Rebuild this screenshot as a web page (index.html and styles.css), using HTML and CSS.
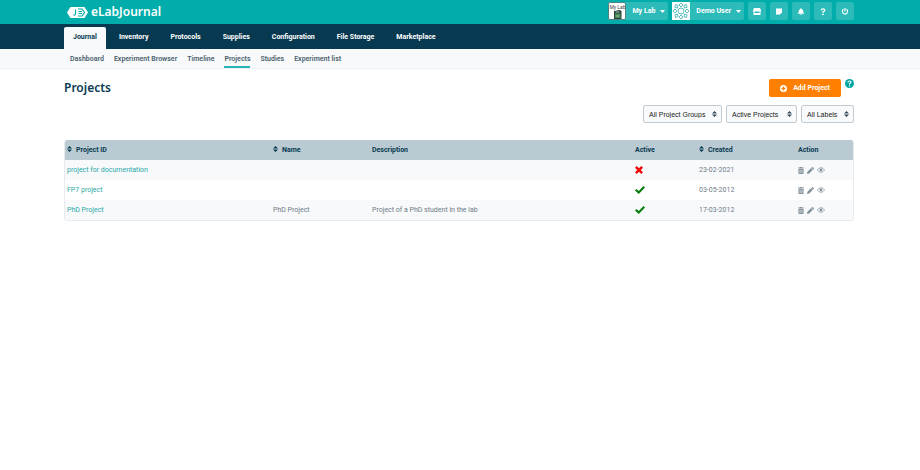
FILE: index.html
```html
<!DOCTYPE html>
<html lang="en">
<head>
  <meta charset="UTF-8" />
  <meta name="viewport" content="width=device-width, initial-scale=1.0"/>
  <title>eLabJournal - Projects</title>
  <link rel="stylesheet" href="styles.css">
</head>
<body>
  <svg class="sprite" aria-hidden="true">
    <symbol id="sort" viewBox="0 0 10 12"><path d="M5 0l5 5H0zM5 12l5-5H0z"/></symbol>
    <symbol id="caret" viewBox="0 0 10 6"><path d="M0 0h10L5 6z"/></symbol>
    <symbol id="trash" viewBox="0 0 14 16"><path fill-rule="evenodd" d="M0 1h4l1-1h4l1 1h4v2H0zM1 4h12v11l-1 1H2l-1-1zM4 6v8h1V6zm2.500 0v8h1V6zM9 6v8h1V6z"/></symbol>
    <symbol id="pencil" viewBox="0 0 16 16"><path d="M0 16l1-5 8.500-8.500 4 4L5 15zM10.500 1.500L12 0h1l3 3v1l-1.500 1.500z"/></symbol>
    <symbol id="eye" viewBox="0 0 20 14"><path fill="none" stroke="currentColor" stroke-width="1.800" d="M1 7q9-12 18 0-9 12-18 0z"/><circle cx="10" cy="7" r="3.500"/></symbol>
    <symbol id="check" viewBox="0 0 20 16"><path d="M0 9l3-3 4.500 4L17 0l3 3L7.500 16z"/></symbol>
    <symbol id="cross" viewBox="0 0 16 16"><path d="M3.500 0L8 4.500 12.500 0 16 3.500 11.500 8l4.500 4.500-3.500 3.500L8 11.500 3.500 16 0 12.500 4.500 8 0 3.500z"/></symbol>
  </svg>

  <header class="topbar">
    <a class="brand" href="#">
      <svg class="logo" viewBox="0 0 42 22" aria-hidden="true">
        <path fill="#fff" d="M7 0h28l7 11-7 11H7L0 11z"/>
        <path fill="none" stroke="#00adab" stroke-width="2.400" d="M17 5v8q0 4-4 3M22 4h8l5 7-5 7h-8M23 9h7M23 13h7"/>
      </svg>
      <span>eLabJournal</span>
    </a>
    <div class="tools">
      <button class="account">
        <span class="avatar lab">
          <span>My Lab</span>
          <svg viewBox="0 0 16 18" aria-hidden="true"><path fill="#263f3b" d="M1 2l11-2 4 2v16H1z"/><path fill="#4d8b56" d="M3 7h11v9H3z"/><path stroke="#a8c3b2" stroke-width="2" d="M4 4h8M6 12h5"/></svg>
        </span>
        <span class="account-name">My Lab</span>
        <svg class="caret"><use href="#caret"/></svg>
      </button>
      <button class="account">
        <span class="avatar user">
          <svg viewBox="0 0 36 36" fill="none" stroke="#20a9aa" stroke-width="1.500" aria-hidden="true">
            <circle cx="18" cy="18" r="6"/>
            <path d="M18 2l4 4-4 4-4-4zM18 26l4 4-4 4-4-4zM2 18l4-4 4 4-4 4zM26 18l4-4 4 4-4 4zM7 5l5 2-1 5-5-1zM29 5l-5 2 1 5 5-1zM7 31l5-2-1-5-5 1zM29 31l-5-2 1-5 5 1z"/>
          </svg>
        </span>
        <span class="account-name">Demo User</span>
        <svg class="caret"><use href="#caret"/></svg>
      </button>
      <button class="tool" aria-label="Marketplace"><svg viewBox="0 0 16 14"><path fill-rule="evenodd" d="M2 0h12l2 5v2h-1v7H1V7H0V5zM3 7v3h10V7z"/></svg></button>
      <button class="tool" aria-label="Notes"><svg viewBox="0 0 14 14"><path d="M1 1h12v8l-4 4H1z"/></svg></button>
      <button class="tool" aria-label="Notifications"><svg viewBox="0 0 14 16"><path d="M6 0h2v2q4 1 4 5 0 4 2 5v1H0v-1q2-1 2-5 0-4 4-5zM5 14h4q-2 4-4 0z"/></svg></button>
      <button class="tool" aria-label="Help"><svg viewBox="0 0 14 16"><path fill="none" stroke="currentColor" stroke-width="3" d="M3 5q0-3 4-3t4 3q0 2-4 4v2"/><path d="M5 13h4v3H5z"/></svg></button>
      <button class="tool" aria-label="Log out"><svg viewBox="0 0 16 16"><path fill="none" stroke="currentColor" stroke-width="2.600" d="M4.500 3a6 6 0 1 0 7 0M8 0v8"/></svg></button>
    </div>
  </header>

  <nav class="main-nav">
    <a class="active" href="#">Journal</a>
    <a href="#">Inventory</a>
    <a href="#">Protocols</a>
    <a href="#">Supplies</a>
    <a href="#">Configuration</a>
    <a href="#">File Storage</a>
    <a href="#">Marketplace</a>
  </nav>

  <nav class="sub-nav">
    <a href="#">Dashboard</a>
    <a href="#">Experiment Browser</a>
    <a href="#">Timeline</a>
    <a class="active" href="#">Projects</a>
    <a href="#">Studies</a>
    <a href="#">Experiment list</a>
  </nav>

  <main>
    <div class="page-head">
      <h1>Projects</h1>
      <div class="head-actions">
        <button class="add-btn">
          <svg viewBox="0 0 16 16" aria-hidden="true"><path fill-rule="evenodd" d="M8 0a8 8 0 1 0 0 16A8 8 0 0 0 8 0zM6.500 3.500h3v3h3v3h-3v3h-3v-3h-3v-3h3z"/></svg>
          Add Project
        </button>
        <button class="help" aria-label="Help">
          <svg viewBox="0 0 18 18"><circle cx="9" cy="9" r="9"/><path fill="none" stroke="#fff" stroke-width="2.400" d="M6 7q0-3 3-3t3 2.500q0 1.500-3 3V11M9 12.500V15"/></svg>
        </button>
      </div>
    </div>

    <form class="filters">
      <select class="groups" aria-label="Project group"><option>All Project Groups</option></select>
      <select class="status" aria-label="Status"><option>Active Projects</option></select>
      <select class="labels" aria-label="Label"><option>All Labels</option></select>
    </form>

    <div class="table-box">
      <table>
        <thead>
          <tr>
            <th class="col-id"><svg class="sort"><use href="#sort"/></svg>Project ID</th>
            <th class="col-name"><svg class="sort"><use href="#sort"/></svg>Name</th>
            <th>Description</th>
            <th class="col-active">Active</th>
            <th class="col-created"><svg class="sort"><use href="#sort"/></svg>Created</th>
            <th class="col-action">Action</th>
          </tr>
        </thead>
        <tbody>
          <tr>
            <td><a href="#">project for documentation</a></td>
            <td></td>
            <td></td>
            <td><svg class="cross"><use href="#cross"/></svg></td>
            <td>23-02-2021</td>
            <td><div class="actions">
              <button aria-label="Delete"><svg class="trash"><use href="#trash"/></svg></button>
              <button aria-label="Edit"><svg class="pencil"><use href="#pencil"/></svg></button>
              <button aria-label="View"><svg class="eye"><use href="#eye"/></svg></button>
            </div></td>
          </tr>
          <tr>
            <td><a href="#">FP7 project</a></td>
            <td></td>
            <td></td>
            <td><svg class="check"><use href="#check"/></svg></td>
            <td>03-05-2012</td>
            <td><div class="actions">
              <button aria-label="Delete"><svg class="trash"><use href="#trash"/></svg></button>
              <button aria-label="Edit"><svg class="pencil"><use href="#pencil"/></svg></button>
              <button aria-label="View"><svg class="eye"><use href="#eye"/></svg></button>
            </div></td>
          </tr>
          <tr>
            <td><a href="#">PhD Project</a></td>
            <td>PhD Project</td>
            <td>Project of a PhD student in the lab</td>
            <td><svg class="check"><use href="#check"/></svg></td>
            <td>17-03-2012</td>
            <td><div class="actions">
              <button aria-label="Delete"><svg class="trash"><use href="#trash"/></svg></button>
              <button aria-label="Edit"><svg class="pencil"><use href="#pencil"/></svg></button>
              <button aria-label="View"><svg class="eye"><use href="#eye"/></svg></button>
            </div></td>
          </tr>
        </tbody>
      </table>
    </div>
  </main>
</body>
</html>
```

FILE: styles.css
```css
* {
  box-sizing: border-box;
  margin: 0;
  padding: 0;
}

body {
  background: #fff;
  color: #6f7b85;
  font-family: Roboto, "Noto Sans", sans-serif;
  font-size: 7px;
  line-height: 10px;
}

a {
  color: inherit;
  text-decoration: none;
}

button {
  border: none;
  background: none;
  color: inherit;
  font: inherit;
  cursor: pointer;
}

svg {
  display: block;
  fill: currentColor;
}

.sprite {
  display: none;
}

.topbar,
.main-nav,
.sub-nav,
main {
  padding: 0 66px 0 64px;
}

/* Top bar */
.topbar {
  display: flex;
  justify-content: space-between;
  background: #00adab;
  color: #fff;
  height: 24px;
}

.brand {
  display: flex;
  align-items: center;
  gap: 3px;
  padding-left: 3px;
  font-family: "Noto Sans", sans-serif;
  font-size: 12px;
  font-weight: 600;
}

.logo {
  width: 21px;
  height: 11px;
}

.tools {
  display: flex;
  gap: 4px;
  padding-top: 2px;
}

.account,
.tool {
  display: flex;
  align-items: center;
  height: 18px;
  border-radius: 2px;
  background: #2dbbb9;
}

.account {
  padding-right: 3px;
  font-weight: 700;
}

.account-name {
  margin: 0 5px 0 6px;
}

.avatar {
  display: flex;
  flex-direction: column;
  align-items: center;
  justify-content: center;
  width: 18px;
  height: 18px;
  background: #fff;
}

.lab {
  border: 1px solid #4e8584;
  border-radius: 2px;
  color: #444;
  font-size: 5px;
  font-weight: 400;
  line-height: 6px;
  white-space: nowrap;
}

.lab svg {
  flex-shrink: 0;
  width: 9px;
  height: 9px;
}

.user svg {
  fill: none;
  width: 18px;
  height: 18px;
}

.caret {
  width: 5px;
  height: 3px;
}

.tool {
  justify-content: center;
  width: 18px;
}

.tool svg {
  width: 8px;
  height: 7px;
}

/* Navigation */
.main-nav {
  display: flex;
  gap: 4px;
  padding-top: 3px;
  background: #073a51;
  color: #fff;
  font-weight: 700;
}

.main-nav a {
  padding: 5px 9px 7px;
  border-radius: 2px 2px 0 0;
}

.main-nav .active {
  background: #f7f9fb;
  color: #073a51;
}

.sub-nav {
  display: flex;
  gap: 10px;
  border-bottom: 1px solid #eceff1;
  background: #f7f9fb;
  color: #4b5f6d;
  font-weight: 600;
}

.sub-nav a {
  padding: 5px 0 2px;
  border-bottom: 2px solid transparent;
}

.sub-nav a:first-child {
  margin-left: 6px;
}

.sub-nav .active {
  border-color: #2bb5b4;
}

/* Page heading */
.page-head {
  display: flex;
  justify-content: space-between;
  padding-top: 10px;
}

h1 {
  color: #073a51;
  font-family: "Noto Sans", sans-serif;
  font-size: 12px;
  font-weight: 600;
  line-height: 18px;
}

.head-actions {
  display: flex;
  align-items: flex-start;
  gap: 4px;
}

.add-btn {
  display: flex;
  align-items: center;
  gap: 6px;
  height: 18px;
  padding: 0 11px;
  border-radius: 2px;
  background: #ff8000;
  color: #fff;
  font-weight: 700;
}

.add-btn svg {
  width: 7px;
  height: 7px;
}

.help {
  color: #00a5a3;
}

.help svg {
  width: 9px;
  height: 9px;
}

.filters {
  display: flex;
  justify-content: flex-end;
  gap: 4px;
  margin: 8px 0 17px;
}

select {
  height: 18px;
  padding: 0 5px;
  appearance: none;
  border: 1px solid #c3cbd2;
  border-radius: 2px;
  background: #f8fafc url("data:image/svg+xml,%3Csvg xmlns='http://www.w3.org/2000/svg' viewBox='0 0 10 12' fill='%23344a5a'%3E%3Cpath d='M5 0l5 5H0zM5 12l5-5H0z'/%3E%3C/svg%3E") no-repeat right 4px center / 5px 6px;
  color: #222;
  font-family: "Liberation Sans", sans-serif;
  font-size: 7px;
}

.groups {
  width: 79px;
}

.status {
  width: 71px;
}

.labels {
  width: 53px;
}

/* Projects table */
.table-box {
  overflow: hidden;
  border: 1px solid #e7ebee;
  border-top: none;
  border-radius: 3px;
}

table {
  width: 100%;
  border-collapse: collapse;
  table-layout: fixed;
}

th {
  height: 20px;
  padding: 0 2px;
  background: #b9cad2;
  color: #073a51;
  text-align: left;
}

td {
  height: 20px;
  padding: 0 2px;
}

tbody tr:nth-child(odd) {
  background: #f7f9fb;
}

td a {
  color: #2ba9a8;
}

.col-id {
  width: 206px;
}

.col-name {
  width: 99px;
}

.col-active {
  width: 64px;
}

.col-created {
  width: 99px;
}

.col-action {
  width: 57px;
}

.sort {
  display: inline-block;
  width: 5px;
  height: 6px;
  margin-right: 4px;
}

.cross {
  width: 8px;
  height: 8px;
  color: #f00a0a;
}

.check {
  width: 10px;
  height: 8px;
  color: #087c0c;
}

.actions {
  display: flex;
  align-items: center;
  gap: 3px;
  color: #82929b;
}

.trash {
  width: 6px;
  height: 7px;
}

.pencil {
  width: 7px;
  height: 7px;
}

.eye {
  width: 8px;
  height: 6px;
}
```
